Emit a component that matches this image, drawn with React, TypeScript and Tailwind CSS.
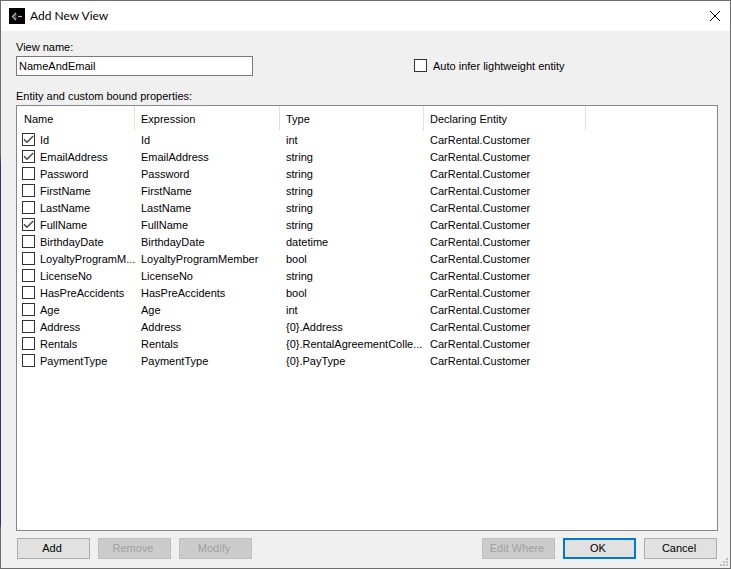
import { useState } from 'react';

interface Property { name: string; type: string; shortName?: string; checked?: boolean; }

const ENTITY = 'CarRental.Customer';

const PROPERTIES: Property[] = [
  { name: 'Id', type: 'int', checked: true },
  { name: 'EmailAddress', type: 'string', checked: true },
  { name: 'Password', type: 'string' },
  { name: 'FirstName', type: 'string' },
  { name: 'LastName', type: 'string' },
  { name: 'FullName', type: 'string', checked: true },
  { name: 'BirthdayDate', type: 'datetime' },
  { name: 'LoyaltyProgramMember', shortName: 'LoyaltyProgramM...', type: 'bool' },
  { name: 'LicenseNo', type: 'string' },
  { name: 'HasPreAccidents', type: 'bool' },
  { name: 'Age', type: 'int' },
  { name: 'Address', type: '{0}.Address' },
  { name: 'Rentals', type: '{0}.RentalAgreementColle...' },
  { name: 'PaymentType', type: '{0}.PayType' },
];

function CheckBox({ id, checked, onChange }: { id: string; checked: boolean; onChange: () => void }) {
  return (
    <span className="grid size-[13px] shrink-0">
      <input id={id} type="checkbox" checked={checked} onChange={onChange}
        className="col-start-1 row-start-1 size-[13px] appearance-none border border-[#333] bg-white" />
      {checked && (
        <svg viewBox="0 0 13 13" className="pointer-events-none col-start-1 row-start-1 size-[13px]" fill="none" stroke="#444" strokeWidth="1.4">
          <path d="M2 6.2 5 9.2 11.2 3" />
        </svg>
      )}
    </span>
  );
}

function DialogButton({ label, disabled, primary }: { label: string; disabled?: boolean; primary?: boolean }) {
  const look = disabled
    ? 'border border-[#bfbfbf] bg-[#ccc] text-[#a0a0a0]'
    : primary
      ? 'border-2 border-[#0078d7] bg-[#e1e1e1]'
      : 'border border-[#adadad] bg-[#e1e1e1]';
  return (
    <button type="button" disabled={disabled} className={`flex h-[21px] w-[73px] items-center justify-center pr-[3px] whitespace-nowrap ${look}`}>
      {label}
    </button>
  );
}

export default function App() {
  const [viewName, setViewName] = useState('NameAndEmail');
  const [infer, setInfer] = useState(false);
  const [selected, setSelected] = useState(PROPERTIES.map(p => !!p.checked));

  const toggle = (idx: number) => setSelected(s => s.map((v, i) => (i === idx ? !v : v)));

  return (
    <div className="flex min-h-screen flex-col bg-[linear-gradient(#6d6d6d_27%,#2b3a63_29%,#2b3a63_92%,#6d6d6d_93%)] pl-px font-['Liberation_Sans',Arial,sans-serif] text-[11px] leading-[17px] text-black">
      <div className="flex grow flex-col border-y border-r border-[#6d6d6d] bg-[#f0f0f0]">
        <header className="flex h-[30px] items-center bg-white px-2">
          <svg viewBox="0 0 16 16" className="size-4" fill="none" stroke="#ccc">
            <rect width="16" height="16" fill="#000" stroke="none" />
            <path d="M7 5 3.5 8.5 7 12" strokeWidth="1.1" />
            <path d="M7.5 6.5 6 8.5 7.5 10.5" stroke="#888" />
            <path d="M9 8.5H13" strokeWidth="1.2" stroke="#bbb" />
          </svg>
          <h1 className="ml-[5px] grow font-[Lato,'Segoe_UI',sans-serif] text-xs">Add New View</h1>
          <button type="button" aria-label="Close" className="flex size-[14px] items-center justify-center">
            <svg viewBox="0 0 10 10" className="size-[10px]" stroke="#000" fill="none">
              <path d="M0 0 10 10M10 0 0 10" />
            </svg>
          </button>
        </header>

        <main className="flex grow flex-col pt-2 pr-3 pb-[9px] pl-[15px]">
          <label htmlFor="view-name" className="self-start">View name:</label>
          <div className="flex items-start">
            <div className="w-[398px]">
              <input id="view-name" value={viewName} onChange={e => setViewName(e.target.value)}
                className="block h-5 w-[237px] border border-[#7a7a7a] bg-white px-[2px] outline-none" />
            </div>
            <div className="flex items-start gap-[6px] pt-[3px] leading-[14px]">
              <CheckBox id="infer" checked={infer} onChange={() => setInfer(v => !v)} />
              <label htmlFor="infer">Auto infer lightweight entity</label>
            </div>
          </div>

          <p id="props-label" className="mt-3">Entity and custom bound properties:</p>
          <div className="grow border border-[#828790] bg-white">
            <table aria-labelledby="props-label" className="w-full table-fixed border-collapse">
              <colgroup>
                <col className="w-[118px]" />
                <col className="w-[145px]" />
                <col className="w-[144px]" />
                <col className="w-[162px]" />
                <col />
              </colgroup>
              <thead>
                <tr className="h-[26px] align-top text-left">
                  {['Name', 'Expression', 'Type', 'Declaring Entity'].map((title, i) => (
                    <th key={title} scope="col" className="p-0 font-normal">
                      <div className={`h-[25px] border-r border-[#e0e0e0] leading-[26px] ${i ? 'pl-[6px]' : 'pl-[7px]'}`}>{title}</div>
                    </th>
                  ))}
                  <td />
                </tr>
              </thead>
              <tbody>
                {PROPERTIES.map((p, i) => (
                  <tr key={p.name} className="h-[17px]">
                    <td className="p-0">
                      <div className="flex items-start gap-[5px] py-px pl-[5px] leading-[15px]">
                        <CheckBox id={p.name} checked={selected[i]} onChange={() => toggle(i)} />
                        <label htmlFor={p.name} title={p.name} className="whitespace-nowrap">{p.shortName ?? p.name}</label>
                      </div>
                    </td>
                    <td className="p-0 pl-[6px] whitespace-nowrap">{p.name}</td>
                    <td className="p-0 pl-[6px] whitespace-nowrap">{p.type}</td>
                    <td className="p-0 pl-[6px] whitespace-nowrap">{ENTITY}</td>
                    <td />
                  </tr>
                ))}
              </tbody>
            </table>
          </div>

          <footer className="mt-[7px] flex justify-between px-px">
            <div className="flex gap-2">
              <DialogButton label="Add" />
              <DialogButton label="Remove" disabled />
              <DialogButton label="Modify" disabled />
            </div>
            <div className="flex gap-2">
              <DialogButton label="Edit Where" disabled />
              <DialogButton label="OK" primary />
              <DialogButton label="Cancel" />
            </div>
          </footer>
        </main>

        {/* resize grip */}
        <svg viewBox="0 0 8 8" className="fixed right-[3px] bottom-[3px] size-2" fill="#bfbfbf">
          <path d="M6 0h2v2H6zM3 3h2v2H3zM6 3h2v2H6zM0 6h2v2H0zM3 6h2v2H3zM6 6h2v2H6z" />
        </svg>
      </div>
    </div>
  );
}
